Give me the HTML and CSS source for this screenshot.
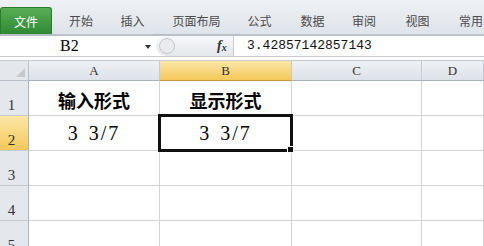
FILE: index.html
```html
<!DOCTYPE html>
<html lang="zh-CN">
<head>
  <meta charset="UTF-8" />
  <title>Excel</title>
  <link rel="stylesheet" href="styles.css">
</head>
<body>
  <div class="ribbon">
    <div class="tab file">文件</div>
    <div class="tab" style="width:50px">开始</div>
    <div class="tab" style="width:53px">插入</div>
    <div class="tab" style="width:75px">页面布局</div>
    <div class="tab" style="width:51px">公式</div>
    <div class="tab" style="width:55px">数据</div>
    <div class="tab" style="width:48px">审阅</div>
    <div class="tab" style="width:59px">视图</div>
    <div class="tab" style="width:48px">常用</div>
  </div>

  <div class="fbar">
    <div class="namebox">
      <span class="name">B2</span>
      <span class="arrow"></span>
    </div>
    <div class="fbtns">
      <span class="knob"></span>
      <span class="fx">f<sub>x</sub></span>
    </div>
    <div class="formula">3.42857142857143</div>
  </div>

  <div class="sheet">
    <div class="corner"></div>
    <div class="colhead">A</div>
    <div class="colhead active">B</div>
    <div class="colhead">C</div>
    <div class="colhead">D</div>

    <div class="rowhead">1</div>
    <div class="cell title">输入形式</div>
    <div class="cell title">显示形式</div>
    <div class="cell"></div>
    <div class="cell"></div>

    <div class="rowhead active">2</div>
    <div class="cell num">3 3/7</div>
    <div class="cell num selected">3 3/7<span class="handle"></span></div>
    <div class="cell"></div>
    <div class="cell"></div>

    <div class="rowhead">3</div>
    <div class="cell"></div>
    <div class="cell"></div>
    <div class="cell"></div>
    <div class="cell"></div>

    <div class="rowhead">4</div>
    <div class="cell"></div>
    <div class="cell"></div>
    <div class="cell"></div>
    <div class="cell"></div>

    <div class="rowhead">5</div>
    <div class="cell"></div>
    <div class="cell"></div>
    <div class="cell"></div>
    <div class="cell"></div>
  </div>
</body>
</html>
```

FILE: styles.css
```css
body {
  margin: 0;
  width: 484px;
  height: 246px;
  overflow: hidden;
  background: #fff;
  font-family: "Noto Sans CJK SC", sans-serif;
}

.ribbon {
  display: flex;
  align-items: flex-end;
  height: 34px;
  background: linear-gradient(#eef1f5, #dfe4ea);
  border-bottom: 2px solid #b9bfc7;
}

.tab {
  height: 27px;
  line-height: 27px;
  font-size: 12px;
  color: #4a4a4a;
  text-align: center;
  flex-shrink: 0;
}

.tab.file {
  width: 52px;
  margin-right: 4px;
  color: #fff;
  background: linear-gradient(#5aac55, #2f8a35);
  border-radius: 3px 3px 0 0;
  border: 1px solid #2c7a31;
  border-bottom: none;
  box-sizing: border-box;
}

.fbar {
  display: flex;
  height: 20px;
  background: #fff;
  border-bottom: 1px solid #c7cbd1;
}

.namebox {
  width: 156px;
  position: relative;
  font-family: "Liberation Serif", "Times New Roman", serif;
  font-size: 16px;
  line-height: 20px;
}

.name {
  position: absolute;
  left: 60px;
}

.arrow {
  position: absolute;
  left: 145px;
  top: 9px;
  border-left: 3px solid transparent;
  border-right: 3px solid transparent;
  border-top: 4px solid #333;
}

.fbtns {
  width: 77px;
  position: relative;
  background: linear-gradient(#f7f8fa, #e4e7eb);
  border-radius: 10px 0 0 10px;
  border-right: 1px solid #c9cdd3;
}

.knob {
  position: absolute;
  left: 3px;
  top: 2px;
  width: 14px;
  height: 14px;
  border-radius: 50%;
  background: #e9ebee;
  border: 1px solid #c3c7cc;
}

.fx {
  position: absolute;
  left: 61px;
  top: 0;
  font-family: "Liberation Serif", "Times New Roman", serif;
  font-style: italic;
  font-weight: bold;
  font-size: 14px;
  line-height: 20px;
  color: #333;
}

.fx sub {
  font-size: 10px;
  vertical-align: -1px;
}

.formula {
  padding-left: 13px;
  font-family: "Liberation Mono", monospace;
  font-size: 13px;
  line-height: 20px;
  color: #111;
}

.sheet {
  display: grid;
  grid-template-columns: 29px 131px 132px 130px 62px;
  grid-template-rows: 20px 35px 35px 35px 35px 35px;
  margin-top: 3px;
  border-top: 1px solid #c5cad1;
}

.corner {
  position: relative;
  background: #e4e8ed;
  border-right: 1px solid #b9c0c9;
  border-bottom: 1px solid #b9c0c9;
}

.corner::after {
  content: "";
  position: absolute;
  right: 3px;
  bottom: 3px;
  border-left: 9px solid transparent;
  border-bottom: 9px solid #c4c9cf;
}

.colhead {
  background: linear-gradient(#eef1f5, #dde2e8);
  border-right: 1px solid #c4cad2;
  border-bottom: 1px solid #a9b3bf;
  text-align: center;
  font-family: "Liberation Serif", "Times New Roman", serif;
  font-size: 13px;
  line-height: 20px;
  color: #333;
}

.colhead.active {
  background: linear-gradient(#fce7a7, #f5c85a);
  border-bottom-color: #c49a3c;
}

.rowhead {
  background: #e4e8ed;
  border-right: 1px solid #a9b3bf;
  border-bottom: 1px solid #c4cad2;
  display: flex;
  align-items: flex-end;
  justify-content: center;
  padding-right: 5px;
  font-family: "Liberation Serif", "Times New Roman", serif;
  font-size: 15px;
  line-height: 20px;
  color: #333;
}

.rowhead.active {
  background: linear-gradient(#fce7a7, #f5c85a);
}

.cell {
  border-right: 1px solid #d4d4d4;
  border-bottom: 1px solid #d4d4d4;
  display: flex;
  align-items: center;
  justify-content: center;
  color: #000;
}

.cell.title {
  font-family: "Noto Sans CJK SC", sans-serif;
  font-weight: bold;
  font-size: 18px;
  padding-top: 4px;
}

.cell.num {
  font-family: "Liberation Serif", "Times New Roman", serif;
  font-size: 20px;
  white-space: pre;
  letter-spacing: 2px;
  word-spacing: 2px;
}

.cell.selected {
  position: relative;
  margin: -2px -1px -1px -2px;
  border: 3px solid #111;
}

.handle {
  position: absolute;
  right: -4px;
  bottom: -4px;
  width: 5px;
  height: 5px;
  background: #111;
  border: 1px solid #fff;
}
```
